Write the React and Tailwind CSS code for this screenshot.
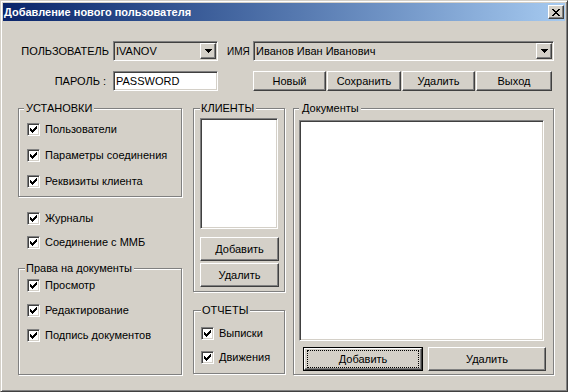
import React from "react";

const raised =
  "border border-t-white border-l-white border-r-[#404040] border-b-[#404040] shadow-[inset_-1px_-1px_0_#808080]";
const sunken =
  "border border-t-[#808080] border-l-[#808080] border-r-white border-b-white shadow-[inset_1px_1px_0_#404040,inset_-1px_-1px_0_#d4d0c8]";

// win2k check glyph, one 3px column per x
const CheckGlyph = () => (
  <svg width="7" height="7" shapeRendering="crispEdges">
    {[2, 3, 4, 3, 2, 1, 0].map((y, x) => (
      <rect key={x} x={x} y={y} width="1" height="3" fill="#000" />
    ))}
  </svg>
);

const Check = ({ label }) => (
  <div className="flex items-center gap-[5px] h-[13px]">
    <span className={`w-[13px] h-[13px] bg-white shrink-0 flex items-center justify-center ${sunken}`}>
      <CheckGlyph />
    </span>
    <span className="leading-[13px] whitespace-nowrap">{label}</span>
  </div>
);

const Arrow = () => (
  <svg width="7" height="4" shapeRendering="crispEdges">
    <rect x="0" y="0" width="7" height="1" fill="#000" />
    <rect x="1" y="1" width="5" height="1" fill="#000" />
    <rect x="2" y="2" width="3" height="1" fill="#000" />
    <rect x="3" y="3" width="1" height="1" fill="#000" />
  </svg>
);

const Combo = ({ className, value }) => (
  <div className={`h-[20px] shrink-0 bg-[#d4d0c8] flex items-center ${sunken} ${className}`}>
    <span className="flex-1 pl-[2px] whitespace-nowrap overflow-hidden">{value}</span>
    <div className={`w-[16px] h-[16px] mr-[1px] flex items-center justify-center bg-[#d4d0c8] ${raised}`}>
      <Arrow />
    </div>
  </div>
);

const Button = ({ className, children }) => (
  <div className={`flex items-center justify-center bg-[#d4d0c8] ${raised} ${className}`}>
    {children}
  </div>
);

const Group = ({ title, className, legendClass, children }) => (
  <fieldset
    className={`border border-[#808080] shadow-[1px_1px_0_#fff,inset_1px_1px_0_#fff] ${className}`}
  >
    <legend className={`bg-[#d4d0c8] leading-[13px] ${legendClass}`}>{title}</legend>
    {children}
  </fieldset>
);

const CloseGlyph = () => (
  <svg width="8" height="7" shapeRendering="crispEdges">
    {[
      [0, 0], [6, 0], [1, 1], [5, 1], [2, 2], [4, 2], [3, 3], [2, 4], [4, 4], [1, 5], [5, 5], [0, 6], [6, 6],
    ].map(([x, y], i) => (
      <rect key={i} x={x} y={y} width="2" height="1" fill="#000" />
    ))}
  </svg>
);

export default function App() {
  return (
    <div className="w-[568px] h-[392px] bg-[#d4d0c8] font-['Liberation_Sans',Arial,sans-serif] text-[11px] text-black border border-t-[#d4d0c8] border-l-[#d4d0c8] border-r-[#404040] border-b-[#404040] shadow-[inset_1px_1px_0_#fff,inset_-1px_-1px_0_#808080] p-[2px]">
      {/* title bar */}
      <div className="h-[18px] flex items-center justify-between bg-linear-to-r from-[#0a246a] to-[#a6caf0] pl-[1px] pr-[1px]">
        <span className="font-bold text-white leading-[18px]">Добавление нового пользователя</span>
        <div className={`w-[16px] h-[14px] flex items-center justify-center bg-[#d4d0c8] ${raised}`}>
          <CloseGlyph />
        </div>
      </div>

      {/* user row */}
      <div className="flex items-center mt-[20px] h-[20px]">
        <span className="w-[106px] shrink-0 text-right">ПОЛЬЗОВАТЕЛЬ</span>
        <Combo className="ml-[4px] w-[105px]" value="IVANOV" />
        <span className="w-[35px] shrink-0 pl-[9px] text-[10px] whitespace-nowrap">ИМЯ</span>
        <Combo className="w-[301px]" value="Иванов Иван Иванович" />
      </div>

      {/* password row */}
      <div className="flex items-center mt-[10px] h-[20px]">
        <span className="w-[106px] text-right pr-[3px]">ПАРОЛЬ :</span>
        <div className={`ml-[4px] w-[105px] h-[20px] bg-white flex items-center pl-[2px] ${sunken}`}>
          PASSWORD
        </div>
        <div className="ml-[35px] flex gap-[1px]">
          <Button className="w-[73px] h-[20px]">Новый</Button>
          <Button className="w-[74px] h-[20px]">Сохранить</Button>
          <Button className="w-[73px] h-[20px]">Удалить</Button>
          <Button className="w-[76px] h-[20px]">Выход</Button>
        </div>
      </div>

      {/* main area */}
      <div className="flex mt-[11px] pl-[15px]">
        {/* left column */}
        <div className="w-[164px] flex flex-col">
          <Group title="УСТАНОВКИ" className="h-[95px] pl-[8px] pt-[8px]" legendClass="-ml-[3px] pl-[2px] pr-[2px]">
            <div className="flex flex-col gap-[13px]">
              <Check label="Пользователи" />
              <Check label="Параметры соединения" />
              <Check label="Реквизиты клиента" />
            </div>
          </Group>
          <div className="flex flex-col gap-[11px] mt-[15px] pl-[9px]">
            <Check label="Журналы" />
            <Check label="Соединение с ММБ" />
          </div>
          <Group title="Права на документы" className="h-[113px] mt-[13px] pl-[8px] pt-[4px]" legendClass="-ml-[2px] pl-[1px] pr-[2px]">
            <div className="flex flex-col gap-[12px]">
              <Check label="Просмотр" />
              <Check label="Редактирование" />
              <Check label="Подпись документов" />
            </div>
          </Group>
        </div>

        {/* middle column */}
        <div className="w-[92px] ml-[11px] flex flex-col">
          <Group title="КЛИЕНТЫ" className="h-[190px] pl-[6px] pt-[3px]" legendClass="pl-[1px] pr-[2px]">
            <div className={`w-[78px] h-[111px] bg-white ${sunken}`} />
            <div className="flex flex-col gap-[2px] mt-[8px]">
              <Button className="w-[79px] h-[24px]">Добавить</Button>
              <Button className="w-[79px] h-[24px]">Удалить</Button>
            </div>
          </Group>
          <Group title="ОТЧЕТЫ" className="h-[70px] mt-[12px] pl-[7px] pt-[10px]" legendClass="pl-[1px] pr-[2px]">
            <div className="flex flex-col gap-[11px]">
              <Check label="Выписки" />
              <Check label="Движения" />
            </div>
          </Group>
        </div>

        {/* right column */}
        <div className="w-[261px] ml-[8px]">
          <Group title="Документы" className="h-[273px] pl-[5px] pt-[5px]" legendClass="pl-[3px] pr-[2px]">
            <div className={`w-[245px] h-[221px] bg-white ${sunken}`} />
            <div className="flex gap-[5px] mt-[6px] ml-[4px]">
              <div className="w-[120px] h-[24px] border border-black">
                <Button className="w-full h-full">
                  <span className="outline outline-1 outline-dotted outline-black px-[1px] w-[110px] h-[16px] flex items-center justify-center">
                    Добавить
                  </span>
                </Button>
              </div>
              <Button className="w-[118px] h-[24px]">Удалить</Button>
            </div>
          </Group>
        </div>
      </div>
    </div>
  );
}
